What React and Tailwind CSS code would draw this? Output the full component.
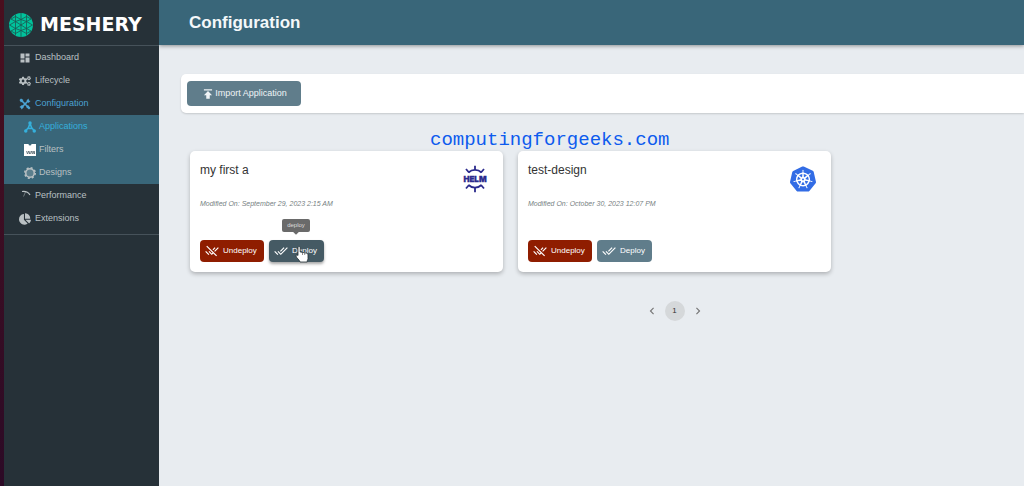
import React, { useState } from "react";
import {
  MdDashboard,
  MdPublish,
  MdDoneAll,
  MdRemoveDone,
  MdChevronLeft,
  MdChevronRight,
} from "react-icons/md";
import { FaCogs, FaChartPie } from "react-icons/fa";
import { SiKubernetes } from "react-icons/si";

const MesheryMark = () => (
  <svg viewBox="0 0 24 24" className="w-6 h-6 shrink-0" aria-hidden="true">
    <circle cx="12" cy="12" r="12" fill="#00c39c" />
    <g fill="none" stroke="#1d5650" strokeWidth="0.8">
      <path d="M12 0v24M6.500 1.500v21M17.500 1.500v21" />
      <path d="M2 6l4.500-2.500L12 6.500l5.500-3L22 6M0.500 12l6-3.500L12 12l5.500-3.500 6 3.500M0.500 12l6 3.500L12 12l5.500 3.500 6-3.500M2 18l4.500 2.500 5.500-3 5.500 3L22 18M2 6l4.500 2.500L12 6.500l5.500 2L22 6M2 18l4.500-2.500 5.500 2 5.500-2L22 18" />
    </g>
  </svg>
);

const ConfigurationIcon = ({ className }) => (
  <svg viewBox="0 0 24 24" className={className} aria-hidden="true">
    <path d="M5 5l14 14M19 5L5 19" stroke="currentColor" strokeWidth="3.500" />
    <path
      d="M1 4l3-3 5 3-5 5zM23 20l-3 3-6-5 4-4zM15 5l4-4 1 4 3 1-4 4zM1 18l5-4 4 4-5 5-1-3z"
      fill="currentColor"
    />
  </svg>
);

const ApplicationsIcon = ({ className }) => (
  <svg viewBox="0 0 24 24" className={className} aria-hidden="true">
    <path
      d="M12 4L9 13l-6 7M12 4l3 9 6 7M8 15h8"
      fill="none"
      stroke="currentColor"
      strokeWidth="3"
    />
    <g fill="currentColor">
      <circle cx="12" cy="4" r="3.500" />
      <circle cx="3.500" cy="20" r="3.500" />
      <circle cx="20.500" cy="20" r="3.500" />
    </g>
  </svg>
);

const FiltersIcon = ({ className }) => (
  <svg viewBox="0 0 24 24" className={className} aria-hidden="true">
    <path d="M0 0h9a3 3 0 0 0 6 0h9v24H0z" fill="#fff" />
    <path
      d="M5 14l2 6 2-6 2 6 1-6M13 20l2-6 2 6M18 20v-6l3 6v-6"
      fill="none"
      stroke="#54646c"
      strokeWidth="1.500"
    />
  </svg>
);

const DesignsIcon = ({ className }) => (
  <svg viewBox="0 0 24 24" className={className} aria-hidden="true">
    <circle cx="12" cy="12" r="8.500" fill="#5c7f8d" stroke="currentColor" strokeWidth="3" />
    <circle
      cx="12"
      cy="12"
      r="10.500"
      fill="none"
      stroke="currentColor"
      strokeWidth="3"
      strokeDasharray="4.120 4.120"
    />
  </svg>
);

const PerformanceIcon = ({ className }) => (
  <svg viewBox="0 0 24 24" className={className} aria-hidden="true">
    <path d="M6 3c7-1 13 2 16 7" fill="none" stroke="currentColor" strokeWidth="2.500" />
    <path d="M13 4L9 13" fill="none" stroke="currentColor" strokeWidth="1" />
  </svg>
);

const HelmIcon = () => (
  <svg viewBox="0 0 26 28" className="w-[26px] h-7" role="img" aria-label="Helm">
    <g fill="none" stroke="#2b2a8c" strokeWidth="1.800">
      <path d="M6.500 7a9.500 9.500 0 0 0 13 0" transform="matrix(1 0 0 -1 0 14.500)" />
      <path d="M6.500 20a9.500 9.500 0 0 0 13 0" />
      <path d="M13 5V0.800M13 22.500v4.700M7 7.500L4 4M19 7.500L22 4M7 20l-3 3.500M19 20l3 3.500" />
    </g>
    <text
      x="13"
      y="16.500"
      textAnchor="middle"
      fontFamily="Inter, sans-serif"
      fontSize="8"
      fontWeight="900"
      letterSpacing="0"
      fill="#2b2a8c"
      stroke="#2b2a8c"
      strokeWidth="0.300"
    >
      HELM
    </text>
  </svg>
);

const HandCursor = () => (
  <svg
    viewBox="0 0 14 17"
    className="absolute left-[26px] top-[6px] w-[14px] h-[17px] pointer-events-none"
    aria-hidden="true"
  >
    <path
      d="M3 1.500c0-1.300 2.200-1.300 2.200 0V6l5.800 1c1.300.2 2 .8 2 2v3.500c0 1-.8 1.500-.8 3.500H5c0-1.500-4-4.500-4-6 0-1 1-1.200 2-.5z"
      fill="#fff"
      stroke="#222d32"
      strokeWidth="0.800"
    />
    <path d="M7.500 6.500V9M9.700 7v2" stroke="#444" strokeWidth="0.600" />
  </svg>
);

const navItems = [
  { name: "Dashboard", icon: MdDashboard },
  { name: "Lifecycle", icon: FaCogs },
  {
    name: "Configuration",
    icon: ConfigurationIcon,
    active: true,
    children: [
      { name: "Applications", icon: ApplicationsIcon, active: true },
      { name: "Filters", icon: FiltersIcon },
      { name: "Designs", icon: DesignsIcon },
    ],
  },
  { name: "Performance", icon: PerformanceIcon },
  { name: "Extensions", icon: FaChartPie },
];

const applications = [
  {
    name: "my first a",
    modified: "September 29, 2023 2:15 AM",
    icon: <HelmIcon />,
    hovered: true,
  },
  {
    name: "test-design",
    modified: "October 30, 2023 12:07 PM",
    icon: <SiKubernetes className="w-[26px] h-7 text-[#326ce5]" />,
    hovered: false,
  },
];

const NavLink = ({ item, nested }) => {
  const Icon = item.icon;
  const color = item.active
    ? nested
      ? "text-[#35b0dc]"
      : "text-[#4ba3d3]"
    : "text-[#b9c0c3]";

  return (
    <a
      href="#"
      className={`flex items-center h-[23px] text-[9px] ${nested ? "gap-[3px] pl-5" : "gap-1 pl-[15px]"} ${color}`}
    >
      <Icon className="w-3 h-3 shrink-0" />
      <span>{item.name}</span>
    </a>
  );
};

const Sidebar = () => (
  <aside className="w-[159px] shrink-0 flex bg-[#263138]">
    <div className="w-1 bg-gradient-to-b from-[#4a0f1e] to-[#2c0a26]" />
    <div className="flex-1">
      <div className="flex items-center gap-1 h-[46px] pt-1 pl-[5px] border-b border-[#46525a]">
        <MesheryMark />
        <span className="pl-[3px] font-['DejaVu_Sans',sans-serif] font-bold text-[19px] leading-none text-white">
          MESHERY
        </span>
      </div>
      <nav className="border-b border-[#46525a] pb-1">
        {navItems.map((item) => (
          <div key={item.name}>
            <NavLink item={item} />
            {item.children && (
              <div className="bg-[#396679]">
                {item.children.map((child) => (
                  <NavLink key={child.name} item={child} nested />
                ))}
              </div>
            )}
          </div>
        ))}
      </nav>
    </div>
  </aside>
);

const ApplicationCard = ({ app }) => (
  <div className="h-[121px] p-[10px] flex flex-col bg-white rounded-[5px] shadow-[0_2px_4px_rgba(0,0,0,0.25)]">
    <div className="flex justify-between">
      <div>
        <h2 className="text-[12px] leading-[18px] text-[#333]">{app.name}</h2>
        <p className="mt-[18px] text-[7px] leading-[14px] italic text-[#777f83]">
          Modified On: {app.modified}
        </p>
      </div>
      <div className="pt-1 pr-[5px]">{app.icon}</div>
    </div>

    <div className="mt-auto flex gap-[5px] text-[8px] text-white">
      <button className="flex items-center gap-1 h-[22px] w-16 pl-[5px] rounded-[4px] bg-[#8f1d00]">
        <MdRemoveDone className="w-[14px] h-[14px]" />
        Undeploy
      </button>
      <div className="relative">
        <button
          className={`flex items-center gap-1 h-[22px] w-[55px] pl-[5px] rounded-[4px] ${
            app.hovered ? "bg-[#455a64] shadow-[0_2px_3px_rgba(0,0,0,0.35)]" : "bg-[#607d8b]"
          }`}
        >
          <MdDoneAll className="w-[14px] h-[14px]" />
          Deploy
        </button>
        {app.hovered && (
          <>
            <div
              role="tooltip"
              className="absolute left-[13px] bottom-[30px] w-7 h-[13px] rounded-[2px] bg-[#6a6a6a] text-[6px] leading-[13px] text-center text-[#ddd]"
            >
              deploy
              <span className="absolute left-3 top-[11px] w-1 h-1 rotate-45 bg-[#6a6a6a]" />
            </div>
            <HandCursor />
          </>
        )}
      </div>
    </div>
  </div>
);

const App = () => {
  const [page, setPage] = useState(1);

  return (
    <div className="min-h-screen flex font-['Liberation_Sans',Arial,sans-serif] bg-[#e8ecf0]">
      <Sidebar />

      <div className="flex-1 min-w-0 overflow-hidden">
        {/* Header */}
        <header className="h-[45px] pl-[30px] flex items-center bg-[#396679] shadow-[0_1px_4px_rgba(0,0,0,0.4)]">
          <h1 className="text-[17px] leading-5 font-bold text-[#f4f8fa]">Configuration</h1>
        </header>

        <main className="pt-[29px] pl-[22px]">
          {/* Toolbar */}
          <div className="h-[39px] pl-[6px] flex items-center bg-white rounded-l-[5px] shadow-[0_1px_2px_rgba(0,0,0,0.15)]">
            <button className="flex items-center justify-center w-[114px] h-[25px] rounded-[4px] bg-[#607d8b] text-[9px] text-[#f0f4f6]">
              <MdPublish className="w-[14px] h-[14px]" />
              Import Application
            </button>
          </div>

          {/* Application cards */}
          <div className="pl-[9px] min-w-[978px]">
            <p className="h-[38px] pt-[17px] pl-60 font-['Liberation_Mono',monospace] text-[19px] leading-[21px] text-[#0d5bee]">
              computingforgeeks.com
            </p>
            <div className="grid grid-cols-3 gap-[15px]">
              {applications.map((app) => (
                <ApplicationCard key={app.name} app={app} />
              ))}
            </div>

            {/* Pagination */}
            <div className="mt-[29px] flex items-center justify-center gap-[6px] text-[#777]">
              <button
                aria-label="Previous page"
                onClick={() => setPage(Math.max(1, page - 1))}
              >
                <MdChevronLeft className="w-[14px] h-[14px]" />
              </button>
              <button className="w-5 h-5 rounded-full bg-[#d5d8da] text-[8px] text-[#333]">
                {page}
              </button>
              <button aria-label="Next page" onClick={() => setPage(1)}>
                <MdChevronRight className="w-[14px] h-[14px]" />
              </button>
            </div>
          </div>
        </main>
      </div>
    </div>
  );
};

export default App;
